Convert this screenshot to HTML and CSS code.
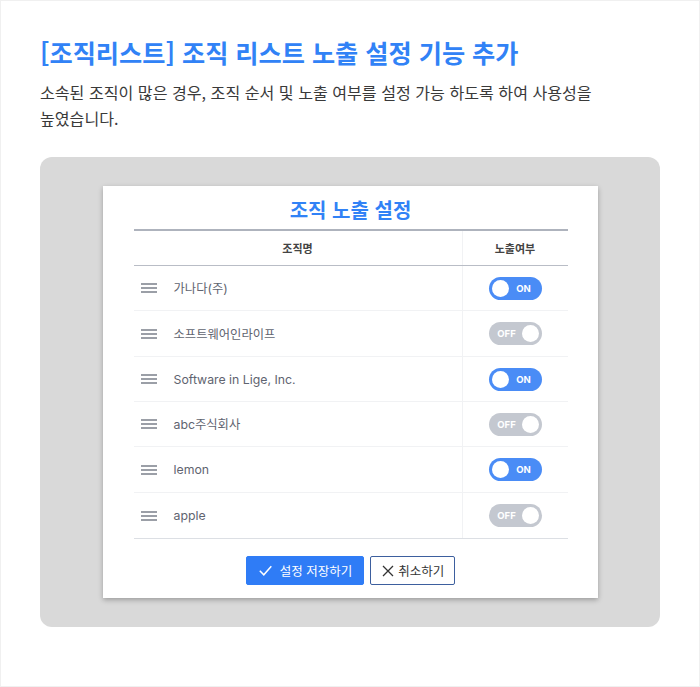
FILE: index.html
```html
<!DOCTYPE html>
<html lang="ko">
<head>
<meta charset="utf-8">
<link rel="stylesheet" href="styles.css">
</head>
<body>
<div class="page">
  <h1 class="title">[조직리스트] 조직 리스트 노출 설정 기능 추가</h1>
  <p class="desc">소속된 조직이 많은 경우, 조직 순서 및 노출 여부를 설정 가능 하도록 하여 사용성을 높였습니다.</p>
  <div class="stage">
    <div class="card">
      <h2 class="card-title">조직 노출 설정</h2>
      <div class="table">
        <div class="row head">
          <div class="cell name-h">조직명</div>
          <div class="cell tog-h">노출여부</div>
        </div>
        <div class="row">
          <div class="cell name"><svg class="grip" width="16" height="10" viewBox="0 0 16 10"><path d="M0 1h16M0 5h16M0 9h16" stroke="#7b808a" stroke-width="1.4"/></svg>가나다(주)</div>
          <div class="cell tog"><span class="switch on"><b></b><em>ON</em></span></div>
        </div>
        <div class="row tall">
          <div class="cell name"><svg class="grip" width="16" height="10" viewBox="0 0 16 10"><path d="M0 1h16M0 5h16M0 9h16" stroke="#7b808a" stroke-width="1.4"/></svg>소프트웨어인라이프</div>
          <div class="cell tog"><span class="switch off"><em>OFF</em><b></b></span></div>
        </div>
        <div class="row">
          <div class="cell name"><svg class="grip" width="16" height="10" viewBox="0 0 16 10"><path d="M0 1h16M0 5h16M0 9h16" stroke="#7b808a" stroke-width="1.4"/></svg>Software in Lige, Inc.</div>
          <div class="cell tog"><span class="switch on"><b></b><em>ON</em></span></div>
        </div>
        <div class="row">
          <div class="cell name"><svg class="grip" width="16" height="10" viewBox="0 0 16 10"><path d="M0 1h16M0 5h16M0 9h16" stroke="#7b808a" stroke-width="1.4"/></svg>abc주식회사</div>
          <div class="cell tog"><span class="switch off"><em>OFF</em><b></b></span></div>
        </div>
        <div class="row tall">
          <div class="cell name"><svg class="grip" width="16" height="10" viewBox="0 0 16 10"><path d="M0 1h16M0 5h16M0 9h16" stroke="#7b808a" stroke-width="1.4"/></svg>lemon</div>
          <div class="cell tog"><span class="switch on"><b></b><em>ON</em></span></div>
        </div>
        <div class="row last">
          <div class="cell name"><svg class="grip" width="16" height="10" viewBox="0 0 16 10"><path d="M0 1h16M0 5h16M0 9h16" stroke="#7b808a" stroke-width="1.4"/></svg>apple</div>
          <div class="cell tog"><span class="switch off"><em>OFF</em><b></b></span></div>
        </div>
      </div>
      <div class="actions">
        <button class="btn primary"><svg width="13" height="12" viewBox="0 0 13 12"><path d="M0.8 5.8l4 4 7.5-8.5" fill="none" stroke="#fff" stroke-width="1.5"/></svg>설정 저장하기</button>
        <button class="btn ghost"><svg width="12" height="12" viewBox="0 0 12 12"><path d="M1 1l10 10M11 1L1 11" fill="none" stroke="#333" stroke-width="1.3"/></svg>취소하기</button>
      </div>
    </div>
  </div>
</div>
</body>
</html>
```

FILE: styles.css
```css
* { box-sizing: border-box; }
html, body { margin: 0; padding: 0; background: #fff; }
body {
  font-family: Inter, "Noto Sans CJK KR", sans-serif;
}
.page {
  width: 700px;
  height: 687px;
  border: 1px solid #f0f0f0;
  padding: 32px 39px 0 39px;
}
.title {
  margin: 0;
  font-family: "Noto Sans CJK KR", sans-serif;
  font-size: 25.2px;
  font-weight: 700;
  line-height: 38px;
  color: #3182f6;
}
.desc {
  margin: 8px 0 0 0;
  font-family: "Noto Sans CJK KR", sans-serif;
  font-size: 16.1px;
  line-height: 26px;
  color: #3a3a3a;
  width: 600px;
  word-break: keep-all;
}
.stage {
  margin-top: 26px;
  background: #d9d9d9;
  border-radius: 12px;
  padding: 29px 0;
  display: flex;
  justify-content: center;
}
.card {
  width: 495px;
  background: #fff;
  box-shadow: 0 2px 5px rgba(0,0,0,0.28);
  padding: 9px 30px 13px 31px;
}
.card-title {
  margin: 0 0 4px 0;
  text-align: center;
  font-family: "Noto Sans CJK KR", sans-serif;
  font-size: 20px;
  font-weight: 700;
  line-height: 30px;
  color: #3182f6;
}
.table {
  border-top: 2px solid #aeb3bd;
  border-bottom: 1px solid #dcdfe4;
}
.row {
  display: grid;
  grid-template-columns: 328px 1fr;
  height: 45px;
  border-bottom: 1px solid #f1f2f4;
}
.row.tall { height: 46px; }
.row.last { border-bottom: none; height: 45px; }
.row.head {
  height: 35px;
  border-bottom: 1px solid #b9bdc6;
}
.cell { display: flex; align-items: center; }
.cell.tog, .cell.tog-h { border-left: 1px solid #f1f2f4; justify-content: center; }
.name-h { justify-content: center; }
.name-h, .tog-h {
  font-family: "Noto Sans CJK KR", sans-serif;
  font-size: 11px;
  font-weight: 700;
  color: #444;
}
.name {
  padding-left: 7px;
  font-family: Inter, "Noto Sans CJK KR", sans-serif;
  font-size: 12.3px;
  color: #5f6470;
}
.grip {
  display: block;
  flex: none;
  margin-right: 17px;
}
.switch {
  display: flex;
  align-items: center;
  width: 53px;
  height: 23px;
  border-radius: 12px;
  padding: 0 3px;
}
.switch b {
  width: 17px;
  height: 17px;
  border-radius: 50%;
  background: #fff;
  flex: none;
}
.switch em {
  flex: 1;
  font-style: normal;
  font-family: Inter, sans-serif;
  font-size: 9.5px;
  font-weight: 700;
  color: #fff;
  text-align: center;
}
.switch.on { background: #4a8cf6; }
.switch.off { background: #c4c8d0; }
.actions {
  display: flex;
  justify-content: center;
  gap: 6px;
  margin-top: 17px;
}
.btn {
  display: flex;
  align-items: center;
  height: 29px;
  font-family: "Noto Sans CJK KR", sans-serif;
  font-size: 12.5px;
  border-radius: 2px;
  white-space: nowrap;
  cursor: pointer;
}
.btn.primary {
  background: #2f7cf6;
  color: #fff;
  border: 1px solid #2f7cf6;
  padding: 0 11px 0 12px;
  gap: 8px;
}
.btn.ghost {
  background: #fff;
  color: #333;
  border: 1px solid #3d5f9e;
  padding: 0 10px 0 11px;
  gap: 4px;
}
```
